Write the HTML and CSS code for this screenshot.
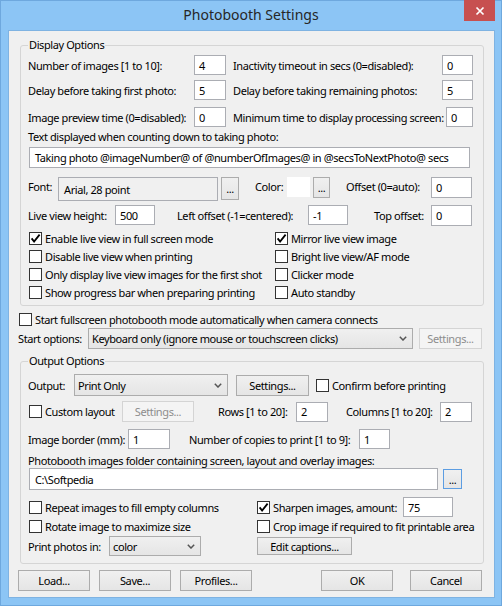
FILE: index.html
```html
<!DOCTYPE html>
<html>
<head>
<meta charset="utf-8">
<title>Photobooth Settings</title>
<link rel="stylesheet" href="styles.css">
</head>
<body>
<div class="window">
  <div class="titlebar">
    <span></span>
    <span class="title">Photobooth Settings</span>
    <span class="close"><svg width="10" height="10" viewBox="0 0 10 10"><path d="M1.5 1.5 L8.5 8.5 M8.5 1.5 L1.5 8.5" stroke="#fff" stroke-width="1.7" fill="none"/></svg></span>
  </div>
  <div class="client">
    <fieldset class="group g-display">
      <legend>Display Options</legend>
      <div class="row d1">
        <span class="lbl c-left">Number of images [1 to 10]:</span>
        <span class="edit e-num">4</span>
        <span class="lbl c-right">Inactivity timeout in secs (0=disabled):</span>
        <span class="edit e-num2">0</span>
      </div>
      <div class="row d2">
        <span class="lbl c-left">Delay before taking first photo:</span>
        <span class="edit e-num">5</span>
        <span class="lbl c-right">Delay before taking remaining photos:</span>
        <span class="edit e-num2">5</span>
      </div>
      <div class="row d3">
        <span class="lbl c-left">Image preview time (0=disabled):</span>
        <span class="edit e-num">0</span>
        <span class="lbl c-right wide">Minimum time to display processing screen:</span>
        <span class="edit e-num3">0</span>
      </div>
      <div class="row d4"><span class="lbl">Text displayed when counting down to taking photo:</span></div>
      <div class="row d5"><span class="edit e-text">Taking photo @imageNumber@ of @numberOfImages@ in @secsToNextPhoto@ secs</span></div>
      <div class="row d6">
        <span class="lbl l-font">Font:</span>
        <span class="edit e-font">Arial, 28 point</span>
        <span class="btn b-font">...</span>
        <span class="lbl l-color">Color:</span>
        <span class="swatch"></span>
        <span class="btn b-color">...</span>
        <span class="lbl l-offset">Offset (0=auto):</span>
        <span class="edit e-off">0</span>
      </div>
      <div class="row d7">
        <span class="lbl l-lvh">Live view height:</span>
        <span class="edit e-w40">500</span>
        <span class="lbl l-left">Left offset (-1=centered):</span>
        <span class="edit e-w40">-1</span>
        <span class="lbl l-top">Top offset:</span>
        <span class="edit e-off">0</span>
      </div>
      <div class="checks">
        <label class="chk"><span class="box"><svg width="11" height="11" viewBox="0 0 11 11"><path d="M1.6 5.4 L4.1 8.6 L9.6 1.6" stroke="#000" stroke-width="1.8" fill="none"/></svg></span>Enable live view in full screen mode</label>
        <label class="chk"><span class="box"><svg width="11" height="11" viewBox="0 0 11 11"><path d="M1.6 5.4 L4.1 8.6 L9.6 1.6" stroke="#000" stroke-width="1.8" fill="none"/></svg></span>Mirror live view image</label>
        <label class="chk"><span class="box"></span>Disable live view when printing</label>
        <label class="chk"><span class="box"></span>Bright live view/AF mode</label>
        <label class="chk"><span class="box"></span>Only display live view images for the first shot</label>
        <label class="chk"><span class="box"></span>Clicker mode</label>
        <label class="chk"><span class="box"></span>Show progress bar when preparing printing</label>
        <label class="chk"><span class="box"></span>Auto standby</label>
      </div>
    </fieldset>

    <div class="row sf">
      <label class="chk"><span class="box"></span>Start fullscreen photobooth mode automatically when camera connects</label>
    </div>
    <div class="row so">
      <span class="lbl l-so">Start options:</span>
      <span class="combo c-so"><span>Keyboard only (ignore mouse or touchscreen clicks)</span><svg class="chev" width="8" height="5" viewBox="0 0 8 5"><path d="M0.8 0.8 L4 4 L7.2 0.8" stroke="#555" stroke-width="1.5" fill="none"/></svg></span>
      <span class="btn disabled b-so">Settings...</span>
    </div>

    <fieldset class="group g-output">
      <legend>Output Options</legend>
      <div class="row o1">
        <span class="lbl l-out">Output:</span>
        <span class="combo c-out"><span>Print Only</span><svg class="chev" width="8" height="5" viewBox="0 0 8 5"><path d="M0.8 0.8 L4 4 L7.2 0.8" stroke="#555" stroke-width="1.5" fill="none"/></svg></span>
        <span class="btn b-oset">Settings...</span>
        <label class="chk c-confirm"><span class="box"></span>Confirm before printing</label>
      </div>
      <div class="row o2">
        <label class="chk c-custom"><span class="box"></span>Custom layout</label>
        <span class="btn disabled b-cset">Settings...</span>
        <span class="lbl l-rows">Rows [1 to 20]:</span>
        <span class="edit e-n32">2</span>
        <span class="lbl l-cols">Columns [1 to 20]:</span>
        <span class="edit e-n32">2</span>
      </div>
      <div class="row o3">
        <span class="lbl l-border">Image border (mm):</span>
        <span class="edit e-border">1</span>
        <span class="lbl l-copies">Number of copies to print [1 to 9]:</span>
        <span class="edit e-copies">1</span>
      </div>
      <div class="row o4"><span class="lbl">Photobooth images folder containing screen, layout and overlay images:</span></div>
      <div class="row o5">
        <span class="edit e-path">C:\Softpedia</span>
        <span class="btn b-path">...</span>
      </div>
      <div class="lower">
        <label class="chk c-l"><span class="box"></span>Repeat images to fill empty columns</label>
        <div class="sharpen">
          <label class="chk c-sharp"><span class="box"><svg width="11" height="11" viewBox="0 0 11 11"><path d="M1.6 5.4 L4.1 8.6 L9.6 1.6" stroke="#000" stroke-width="1.8" fill="none"/></svg></span>Sharpen images, amount:</label>
          <span class="edit e-sharp">75</span>
        </div>
        <label class="chk c-l"><span class="box"></span>Rotate image to maximize size</label>
        <label class="chk"><span class="box"></span>Crop image if required to fit printable area</label>
        <div class="print">
          <span class="lbl l-print">Print photos in:</span>
          <span class="combo c-print"><span>color</span><svg class="chev" width="8" height="5" viewBox="0 0 8 5"><path d="M0.8 0.8 L4 4 L7.2 0.8" stroke="#555" stroke-width="1.5" fill="none"/></svg></span>
        </div>
        <div class="capwrap"><span class="btn b-cap">Edit captions...</span></div>
      </div>
    </fieldset>

    <div class="row btns">
      <span class="btn b-load">Load...</span>
      <span class="btn b-save">Save...</span>
      <span class="btn b-prof">Profiles...</span>
      <span class="btn b-ok">OK</span>
      <span class="btn b-cancel">Cancel</span>
    </div>
  </div>
</div>
</body>
</html>
```
FILE: styles.css
```css
* { box-sizing: border-box; }
html, body { margin: 0; padding: 0; }
body {
  width: 502px; height: 606px; overflow: hidden;
  background: #8cc5f5;
  font-family: "Noto Sans", "Open Sans", sans-serif;
  font-size: 11px; color: #000;
  letter-spacing: -0.4px;
}
.window {
  width: 502px; height: 606px;
  background: #8cc5f5;
  box-shadow: inset 0 0 0 1px #6ea8de;
  display: flex; flex-direction: column;
}
.titlebar {
  height: 30px; flex: none;
  display: grid; grid-template-columns: 1fr auto 1fr;
}
.title { font-size: 14px; line-height: 30px; color: #262626; letter-spacing: 0; }
.close {
  justify-self: end; align-self: start;
  width: 31px; height: 21px; margin-right: 7px;
  background: #c75050;
  display: flex; align-items: center; justify-content: center;
}
.client {
  flex: none;
  margin-left: 8px; width: 487px; height: 568px;
  background: #f0f0f0;
  border: 1px solid #7fb3e2;
}
.group {
  margin: 0; min-width: 0; width: 464px;
  border: 1px solid #d5d5d5; border-radius: 3px;
  padding: 2px 7px 4px 7px;
}
.group legend { padding: 0 1px; line-height: 16px; font-size: 11px; }
.g-display { margin: 6px 0 0 11px; }
.g-output { margin: 4px 0 0 11px; padding-top: 5px; padding-bottom: 7px; }

.row { display: flex; align-items: center; white-space: nowrap; }
.lbl { flex: none; white-space: nowrap; }
.edit {
  flex: none; display: flex; align-items: center;
  height: 20px; border: 1px solid #abadb3; background: #fff;
  padding: 0 4px; white-space: nowrap; overflow: hidden;
}
.btn {
  flex: none; display: flex; align-items: center; justify-content: center;
  height: 21px; border: 1px solid #acacac;
  background: linear-gradient(#f0f0f0, #e5e5e5);
  white-space: nowrap;
}
.btn.disabled { color: #8d8d8d; border-color: #d4d4d4; background: #f4f4f4; }
.combo {
  flex: none; display: flex; align-items: center; justify-content: space-between;
  border: 1px solid #acacac;
  background: linear-gradient(#f0f0f0, #e5e5e5);
  padding: 0 5px 0 3px; white-space: nowrap;
}
.chev { flex: none; }

.chk { display: flex; align-items: center; white-space: nowrap; }
.box {
  flex: none; width: 13px; height: 13px; margin-right: 3px;
  border: 1px solid #333; background: #fff;
  display: flex; align-items: center; justify-content: center;
}

/* display options */
.d1 { height: 20px; }
.d2 { height: 20px; margin-top: 5px; }
.d3 { height: 20px; margin-top: 7px; }
.d4 { height: 16px; margin-top: 1px; }
.d5 { height: 21px; margin-top: 3px; }
.d6 { height: 24px; margin-top: 9px; align-items: flex-start; }
.d7 { height: 20px; margin-top: 4px; }
.c-left { width: 166px; }
.e-num { width: 32px; }
.c-right { width: 209px; margin-left: 7px; }
.c-right.wide { width: 213px; }
.e-num2 { width: 31px; }
.e-num3 { width: 27px; }
.e-text { width: 441px; height: 21px; margin-left: 1px; padding-left: 5px; }
.l-font { width: 30px; line-height: 20px; }
.e-font { width: 160px; height: 24px; background: #f0f0f0; padding-left: 5px; }
.b-font { width: 18px; height: 23px; margin-left: 3px; }
.l-color { width: 32px; margin-left: 16px; line-height: 20px; }
.swatch { flex: none; width: 23px; height: 20px; background: #fff; }
.b-color { width: 17px; height: 21px; margin-left: 3px; }
.l-offset { width: 101px; padding-left: 16px; line-height: 20px; }
.e-off { width: 41px; height: 21px; }
.l-lvh { width: 87px; }
.e-w40 { width: 40px; }
.l-left { width: 153px; padding-left: 22px; }
.l-top { width: 83px; padding-left: 26px; }
.checks {
  margin: 4px 0 0 1px;
  display: grid; grid-template-columns: 246px 1fr; grid-auto-rows: 18px;
}

/* middle */
.sf { height: 18px; margin: 4px 0 0 10px; }
.so { height: 21px; margin-left: 9px; }
.l-so { width: 70px; }
.c-so { width: 325px; height: 21px; }
.b-so { width: 63px; margin-left: 6px; }

/* output options */
.o1 { height: 22px; }
.l-out { width: 46px; }
.c-out { width: 154px; height: 22px; }
.b-oset { width: 73px; margin-left: 8px; }
.c-confirm { margin-left: 7px; }
.o2 { height: 21px; margin-top: 5px; }
.c-custom { width: 93px; margin-left: 1px; }
.b-cset { width: 72px; }
.l-rows { width: 102px; padding-left: 24px; }
.e-n32 { width: 32px; }
.l-cols { width: 112px; padding-left: 18px; }
.o3 { height: 20px; margin-top: 7px; }
.l-border { width: 100px; }
.e-border { width: 42px; }
.l-copies { width: 189px; padding-left: 19px; }
.e-copies { width: 31px; }
.o4 { height: 16px; margin-top: 3px; }
.o5 { height: 22px; }
.e-path { width: 409px; height: 22px; margin-left: 1px; padding-left: 5px; }
.b-path { width: 19px; height: 20px; margin-left: 5px; border-color: #5c9de2; }
.lower {
  margin-top: 7px;
  display: grid; grid-template-columns: 229px 1fr;
  grid-template-rows: 20px 19px 20px; align-items: center;
}
.c-l { margin-left: 1px; }
.sharpen { display: flex; align-items: center; }
.c-sharp { width: 146px; }
.e-sharp { width: 50px; }
.print { display: flex; align-items: center; }
.l-print { width: 81px; }
.c-print { width: 92px; height: 20px; }
.capwrap { display: flex; align-items: center; }
.b-cap { width: 95px; height: 18px; }

/* bottom buttons */
.btns { height: 21px; margin: 6px 0 0 9px; }
.btns .btn { width: 72px; }
.b-save, .b-prof { margin-left: 9px; }
.b-ok { margin-left: 69px; }
.b-cancel { margin-left: 17px; }
```
